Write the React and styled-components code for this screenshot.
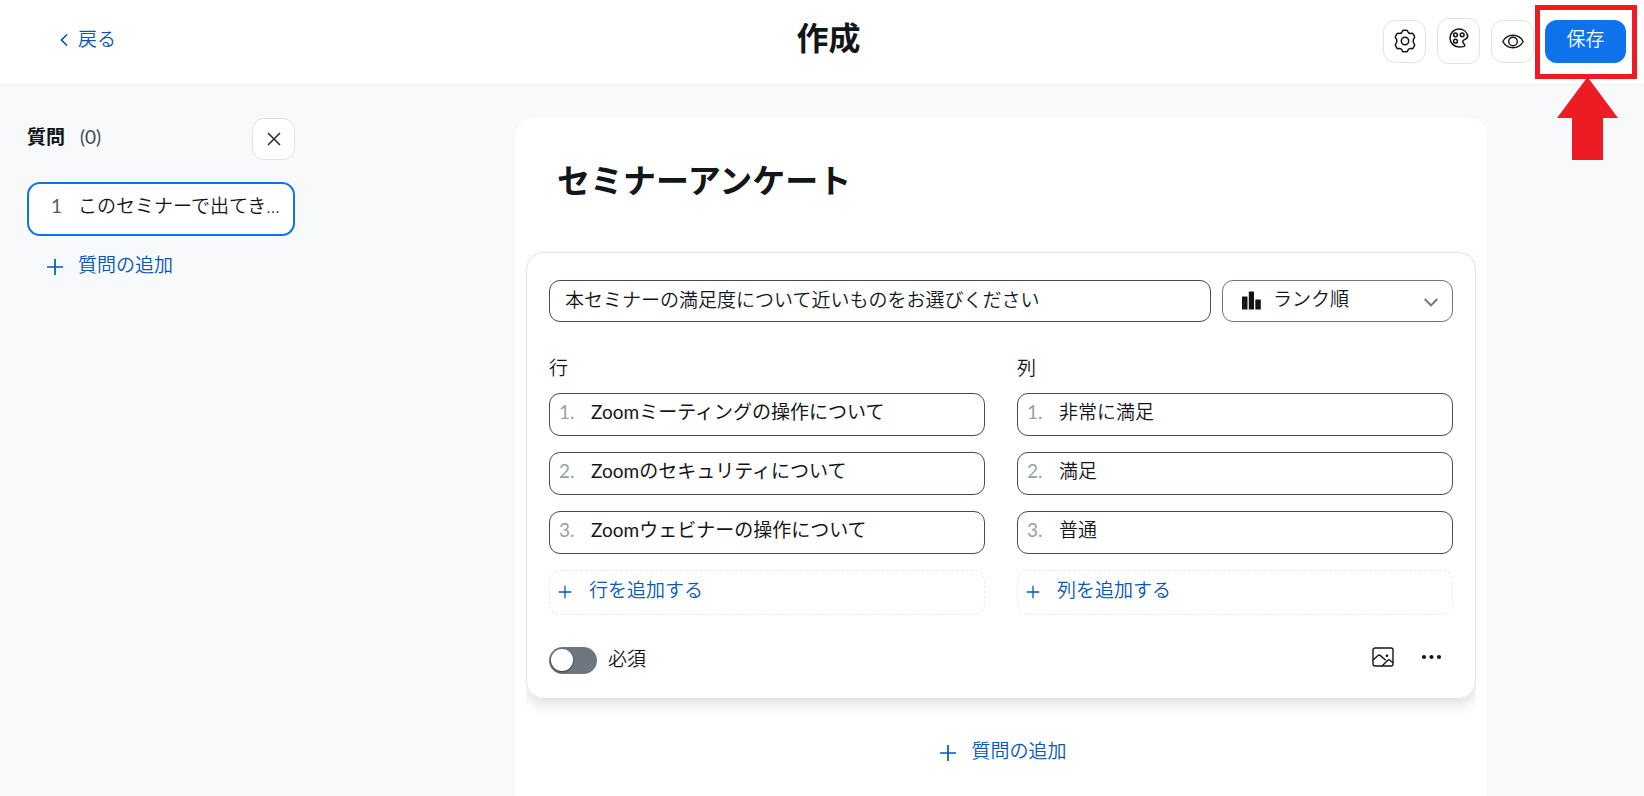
import React from "react";
import styled, { createGlobalStyle } from "styled-components";
import { useState } from "react";

const GlobalStyle = createGlobalStyle`
  * {
    box-sizing: border-box;
  }

  body {
    margin: 0;
    background: #f7f9fb;
    color: #131619;
    font-family: Lato, "Noto Sans CJK JP", sans-serif;
    font-size: 19px;
    font-weight: 350;
    line-height: 24px;
  }

  button, input, select {
    font: inherit;
    color: inherit;
    margin: 0;
  }

  svg {
    display: block;
    flex: none;
  }
`;

const Page = styled.div`
  min-height: 100vh;
  display: flex;
  flex-direction: column;
`;

// header
const Header = styled.header`
  display: grid;
  grid-template-columns: 1fr auto 1fr;
  align-items: center;
  height: 85px;
  padding: 0 18px 2px 31px;
  background: #ffffff;
  border-bottom: 1px solid #edf0f4;
`;

const BackLink = styled.a`
  justify-self: start;
  display: flex;
  align-items: center;
  gap: 10px;
  padding: 0 28px 4px;
  color: #0956b5;
  text-decoration: none;
`;

const PageTitle = styled.h1`
  margin: 0;
  padding-bottom: 6px;
  font-size: 32px;
  line-height: 40px;
  font-weight: 700;
`;

const HeaderTools = styled.div`
  justify-self: end;
  display: flex;
  align-items: center;
  gap: 11px;
`;

const IconButton = styled.button`
  width: 43px;
  height: ${({ $tall }) => ($tall ? "46px" : "43px")};
  display: flex;
  align-items: center;
  justify-content: center;
  padding: ${({ $tall }) => ($tall ? "0 0 6px" : "0")};
  background: #ffffff;
  border: 1px solid #dfe3e8;
  border-radius: 12px;
`;

const CloseButton = styled(IconButton)`
  height: 42px;
`;

const SaveButton = styled.button`
  width: 81px;
  height: 43px;
  padding: 0 0 5px;
  border: 0;
  border-radius: 12px;
  background: #0e72ed;
  color: #ffffff;
`;

const SaveArea = styled.div`
  position: relative;
`;

// red frame and arrow over the save button
const Frame = styled.div`
  position: absolute;
  top: -15px;
  right: -11px;
  bottom: -16px;
  left: -10px;
  border: 5px solid #ed1c24;
  pointer-events: none;
`;

const Arrow = styled.svg`
  position: absolute;
  top: 57px;
  left: 12px;
  pointer-events: none;
`;

// body
const Body = styled.main`
  flex: 1;
  display: flex;
  padding-top: 33px;
`;

const Sidebar = styled.aside`
  flex: none;
  width: 358px;
  padding: 0 63px 0 27px;
`;

const SidebarHead = styled.div`
  display: flex;
  align-items: center;
  justify-content: space-between;
  margin-bottom: 22px;
`;

const SidebarTitle = styled.h2`
  margin: 0;
  padding-bottom: 4px;
  font-size: 19px;
  line-height: 24px;
  font-weight: 700;
`;

const Count = styled.span`
  margin-left: 15px;
  font-weight: 400;
  color: #444b53;
`;

const QuestionItem = styled.button`
  width: 100%;
  height: 54px;
  display: flex;
  align-items: center;
  gap: 16px;
  padding: 0 10px 6px 22px;
  background: #ffffff;
  border: 2px solid #0e72ed;
  border-radius: 13px;
  white-space: nowrap;
`;

const QuestionNumber = styled.span`
  font-weight: 400;
  color: #525a63;
`;

const AddButton = styled.button`
  display: flex;
  align-items: center;
  gap: 14px;
  padding: 0;
  border: 0;
  background: none;
  color: #0956b5;

  span {
    padding-bottom: 3px;
  }
`;

const SidebarAdd = styled(AddButton)`
  margin: 17px 0 0 19px;
`;

const Content = styled.div`
  flex: 1;
  min-width: 0;
  display: flex;
  justify-content: center;
`;

const Panel = styled.section`
  width: 100%;
  max-width: 972px;
  padding: 0 11px 16px;
  background: #ffffff;
  border-radius: 18px 18px 0 0;
`;

const SurveyTitle = styled.h2`
  margin: 0;
  padding: 38px 31px 48px;
  font-size: 33px;
  line-height: 48px;
  font-weight: 700;
`;

const CardClip = styled.div`
  clip-path: inset(-8px 0 -24px);
`;

const Card = styled.div`
  padding: 27px 22px 24px;
  border: 1px solid #e1e3e6;
  border-radius: 18px;
  box-shadow: 0 6px 14px rgba(0, 0, 0, 0.12);
`;

const QuestionRow = styled.div`
  display: flex;
  gap: 11px;
`;

const QuestionInput = styled.input`
  flex: 1;
  min-width: 0;
  height: 42px;
  padding: 0 15px 6px;
  border: 1px solid #444b53;
  border-radius: 11px;
  background: #ffffff;
`;

const TypeBox = styled.div`
  position: relative;
  width: 231px;
`;

const TypeSelect = styled.select`
  width: 100%;
  height: 42px;
  padding: 0 40px 4px 50px;
  appearance: none;
  border: 1px solid #6e7680;
  border-radius: 11px;
  background: #ffffff;
`;

const TypeIcons = styled.div`
  position: absolute;
  inset: 0;
  display: flex;
  align-items: center;
  justify-content: space-between;
  padding: 0 15px 2px 20px;
  pointer-events: none;
`;

const Columns = styled.div`
  display: grid;
  grid-template-columns: 1fr 1fr;
  gap: 32px;
  margin-top: 34px;
`;

const Column = styled.fieldset`
  min-width: 0;
  margin: 0;
  padding: 0;
  border: 0;
  display: flex;
  flex-direction: column;

  legend {
    padding: 0;
    margin-bottom: 13px;
  }
`;

const Choices = styled.div`
  display: flex;
  flex-direction: column;
  gap: 16px;
`;

const Choice = styled.label`
  height: 43px;
  display: flex;
  align-items: center;
  padding: 0 9px 5px;
  border: 1px solid #444b53;
  border-radius: 11px;

  span {
    width: 32px;
    font-weight: 400;
    color: #98a0a9;
  }

  input {
    flex: 1;
    min-width: 0;
    padding: 0;
    border: 0;
    outline: 0;
    background: none;
    font-weight: ${({ $latin }) => ($latin ? 400 : 350)};
  }
`;

const AddChoice = styled(AddButton)`
  height: 45px;
  gap: 17px;
  padding: 0 8px 2px;
  border: 1px dashed #e9ebee;
  border-radius: 11px;
`;

const CardFoot = styled.div`
  display: flex;
  align-items: center;
  justify-content: space-between;
  margin-top: 32px;
`;

const Required = styled.label`
  display: flex;
  align-items: center;
  gap: 11px;

  span {
    padding-bottom: 3px;
  }
`;

const Toggle = styled.input`
  appearance: none;
  width: 48px;
  height: 27px;
  padding: 2px;
  border-radius: 14px;
  background: #6e7680;

  &::before {
    content: "";
    display: block;
    width: 22px;
    height: 22px;
    border-radius: 50%;
    background: #ffffff;
    box-shadow: 0 1px 2px rgba(0, 0, 0, 0.5);
  }

  &:checked {
    background: #0e72ed;
  }

  &:checked::before {
    margin-left: 22px;
  }
`;

const FootTools = styled.div`
  display: flex;
  align-items: center;
  gap: 27px;
  padding: 0 10px 7px 0;
`;

const PlainButton = styled.button`
  display: flex;
  padding: 0;
  border: 0;
  background: none;
`;

const PanelAdd = styled(AddButton)`
  margin: 40px auto 0;
  padding-left: 4px;
`;

const PlusIcon = ({ size }) => (
  <svg width={size} height={size} viewBox="0 0 18 18" fill="none" stroke="currentColor" strokeWidth="1.7">
    <path d="M9 1v16M1 9h16" />
  </svg>
);

const GearIcon = () => (
  <svg width="24" height="24" viewBox="0 0 24 24" fill="none" stroke="#131619" strokeWidth="1.5" strokeLinejoin="round">
    <path d="M10.600 1.200h2.800c.9 0 1.200.6 1.400 1.300.5 1.500 1.700 2.200 3.300 1.900.9-.2 1.600-.2 2.100.6l1.300 2.300c.5.8.2 1.400-.4 2-1.200 1.200-1.200 4.200 0 5.400.6.6.9 1.200.4 2l-1.300 2.300c-.5.8-1.200.8-2.100.6-1.600-.3-2.800.4-3.300 1.900-.2.7-.5 1.300-1.400 1.300h-2.800c-.9 0-1.200-.6-1.400-1.300-.5-1.500-1.700-2.200-3.300-1.900-.9.2-1.600.2-2.100-.6l-1.300-2.300c-.5-.8-.2-1.400.4-2 1.200-1.200 1.200-4.200 0-5.400-.6-.6-.9-1.200-.4-2l1.300-2.300c.5-.8 1.200-.8 2.100-.6 1.600.3 2.800-.4 3.300-1.900.2-.7.5-1.300 1.400-1.300z" />
    <circle cx="12" cy="12" r="3.700" />
  </svg>
);

const PaletteIcon = () => (
  <svg width="20" height="20" viewBox="0 0 20 20" fill="none" stroke="#131619" strokeWidth="1.5" strokeLinejoin="round">
    <path d="M18.700 8C17.900 3.900 14.400 1 10 1 5 1 1 5 1 10s4 9 9 9c2 0 3.700-.1 5-.6 1.200-.5.8-1.300.2-2.100-1-1.300-1.800-2-1.300-3.300.4-1 1.400-1.300 2.600-1.900 1.500-.8 2.500-2.200 2.200-4.100z" />
    <circle cx="6.500" cy="6.800" r="1.900" />
    <circle cx="13.200" cy="6.800" r="1.900" />
    <circle cx="6.500" cy="13.200" r="1.900" />
  </svg>
);

const EyeIcon = () => (
  <svg width="22" height="22" viewBox="0 0 22 22" fill="none" stroke="#131619" strokeWidth="1.400" strokeLinejoin="round">
    <path d="M.8 11.500C3 7.400 6.800 5.300 11 5.300s8 2.100 10.200 6.200c-2.200 4.100-6 6.200-10.200 6.200S3 15.600.8 11.500z" />
    <circle cx="11" cy="11.500" r="4.300" />
  </svg>
);

const ImageIcon = () => (
  <svg width="22" height="20" viewBox="0 0 22 20" fill="none" stroke="#131619" strokeWidth="1.4" strokeLinejoin="round">
    <rect x="1" y="1" width="20" height="18" rx="2" />
    <path d="M1 13l5-4.600c.8-.7 1.400-.7 2.200 0l5.400 4.900M10 19l5.800-5.800c.7-.7 1.300-.7 2 0L21 15.700" />
    <circle cx="15" cy="8.800" r="1.300" fill="#131619" stroke="none" />
  </svg>
);

const rows = [
  "Zoomミーティングの操作について",
  "Zoomのセキュリティについて",
  "Zoomウェビナーの操作について",
];
const cols = ["非常に満足", "満足", "普通"];

// 行・列の選択肢
const ChoiceColumn = ({ label, items, addLabel, latin }) => (
  <Column>
    <legend>{label}</legend>
    <Choices>
      {items.map((item, i) => (
        <Choice key={item} $latin={latin}>
          <span>{i + 1}.</span>
          <input type="text" defaultValue={item} />
        </Choice>
      ))}
      <AddChoice type="button">
        <PlusIcon size={14} />
        <span>{addLabel}</span>
      </AddChoice>
    </Choices>
  </Column>
);

const App = () => {
  const [question, setQuestion] = useState(
    "本セミナーの満足度について近いものをお選びください"
  );
  const [required, setRequired] = useState(false);

  return (
    <>
      <GlobalStyle />
      <Page>
        <Header>
          <BackLink href="#">
            <svg width="9" height="14" viewBox="0 0 9 14" fill="none" stroke="currentColor" strokeWidth="1.7">
              <path d="M8 2.500L2.500 8 8 13.500" />
            </svg>
            戻る
          </BackLink>
          <PageTitle>作成</PageTitle>
          <HeaderTools>
            <IconButton type="button" aria-label="設定">
              <GearIcon />
            </IconButton>
            <IconButton type="button" aria-label="テーマ" $tall>
              <PaletteIcon />
            </IconButton>
            <IconButton type="button" aria-label="プレビュー">
              <EyeIcon />
            </IconButton>
            <SaveArea>
              <SaveButton type="button">保存</SaveButton>
              <Frame />
              <Arrow width="61" height="83" viewBox="0 0 61 83" fill="#ed1c24">
                <path d="M30.500 0L61 41H46V83H15V41H0z" />
              </Arrow>
            </SaveArea>
          </HeaderTools>
        </Header>
        <Body>
          <Sidebar>
            <SidebarHead>
              <SidebarTitle>
                質問<Count>(0)</Count>
              </SidebarTitle>
              <CloseButton type="button" aria-label="閉じる">
                <svg width="14" height="14" viewBox="0 0 14 14" stroke="#222a33" strokeWidth="1.5">
                  <path d="M1 1l12 12M13 1L1 13" />
                </svg>
              </CloseButton>
            </SidebarHead>
            <QuestionItem type="button">
              <QuestionNumber>1</QuestionNumber>
              <span>このセミナーで出てき...</span>
            </QuestionItem>
            <SidebarAdd type="button">
              <PlusIcon size={18} />
              <span>質問の追加</span>
            </SidebarAdd>
          </Sidebar>
          <Content>
            <Panel>
              <SurveyTitle>セミナーアンケート</SurveyTitle>
              <CardClip>
                <Card>
                  <QuestionRow>
                    <QuestionInput
                      type="text"
                      aria-label="質問"
                      value={question}
                      onChange={(e) => setQuestion(e.target.value)}
                    />
                    <TypeBox>
                      <TypeSelect aria-label="質問の種類">
                        <option>ランク順</option>
                      </TypeSelect>
                      <TypeIcons>
                        <svg width="19" height="19" viewBox="0 0 19 19" fill="#131619">
                          <rect x="0" y="5.500" width="5.500" height="13" rx="0.500" />
                          <rect x="6.800" y="0.500" width="5.200" height="18" rx="0.500" />
                          <rect x="13.300" y="8.500" width="5.500" height="10" rx="0.500" />
                        </svg>
                        <svg width="14" height="14" viewBox="0 0 14 14" fill="none" stroke="#6e7680" strokeWidth="1.9">
                          <path d="M.700 6L7 12.300 13.300 6" />
                        </svg>
                      </TypeIcons>
                    </TypeBox>
                  </QuestionRow>
                  <Columns>
                    <ChoiceColumn label="行" items={rows} addLabel="行を追加する" latin />
                    <ChoiceColumn label="列" items={cols} addLabel="列を追加する" />
                  </Columns>
                  <CardFoot>
                    <Required>
                      <Toggle
                        type="checkbox"
                        checked={required}
                        onChange={(e) => setRequired(e.target.checked)}
                      />
                      <span>必須</span>
                    </Required>
                    <FootTools>
                      <PlainButton type="button" aria-label="画像">
                        <ImageIcon />
                      </PlainButton>
                      <PlainButton type="button" aria-label="その他">
                        <svg width="22" height="20" viewBox="0 0 22 20" fill="#131619">
                          <circle cx="3" cy="10" r="2.100" />
                          <circle cx="10.500" cy="10" r="2.100" />
                          <circle cx="18" cy="10" r="2.100" />
                        </svg>
                      </PlainButton>
                    </FootTools>
                  </CardFoot>
                </Card>
              </CardClip>
              <PanelAdd type="button">
                <PlusIcon size={18} />
                <span>質問の追加</span>
              </PanelAdd>
            </Panel>
          </Content>
        </Body>
      </Page>
    </>
  );
};

export default App;
